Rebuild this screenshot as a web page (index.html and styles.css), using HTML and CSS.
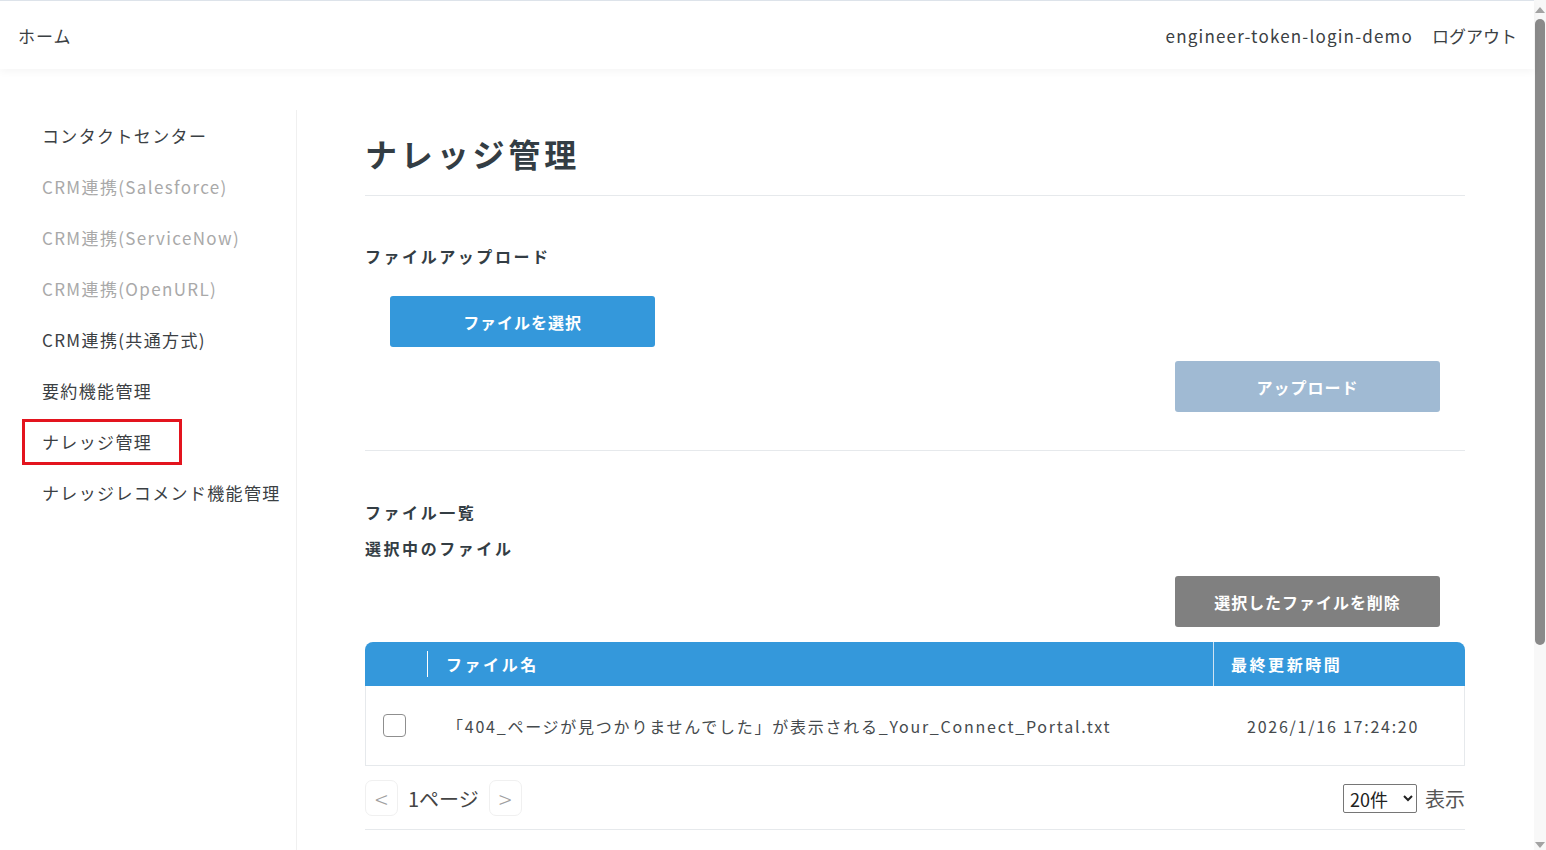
FILE: index.html
```html
<!DOCTYPE html>
<html lang="ja">
<head>
<meta charset="utf-8">
<title>ナレッジ管理</title>
<link rel="stylesheet" href="styles.css">
</head>
<body>
<div class="window">
  <div class="page">
    <header class="topbar">
      <a class="topbar-home" href="#">ホーム</a>
      <div class="topbar-user">
        <span class="topbar-name">engineer-token-login-demo</span>
        <a class="topbar-logout" href="#">ログアウト</a>
      </div>
    </header>

    <div class="layout">
      <nav class="sidebar">
        <ul class="menu">
          <li class="menu-item">コンタクトセンター</li>
          <li class="menu-item is-disabled">CRM連携(Salesforce)</li>
          <li class="menu-item is-disabled">CRM連携(ServiceNow)</li>
          <li class="menu-item is-disabled">CRM連携(OpenURL)</li>
          <li class="menu-item">CRM連携(共通方式)</li>
          <li class="menu-item">要約機能管理</li>
          <li class="menu-item is-current">ナレッジ管理</li>
          <li class="menu-item">ナレッジレコメンド機能管理</li>
        </ul>
      </nav>

      <main class="content">
        <h1 class="page-title">ナレッジ管理</h1>

        <section class="upload">
          <h2 class="section-title">ファイルアップロード</h2>
          <button class="btn btn-primary btn-pick" type="button">ファイルを選択</button>
          <div class="btn-row">
            <button class="btn btn-disabled" type="button">アップロード</button>
          </div>
        </section>

        <section class="files">
          <h2 class="section-title">ファイル一覧</h2>
          <h2 class="section-title sub">選択中のファイル</h2>
          <div class="btn-row">
            <button class="btn btn-gray" type="button">選択したファイルを削除</button>
          </div>

          <div class="table">
            <div class="table-head">
              <div class="col-check"><span class="head-sep"></span></div>
              <div class="col-name">ファイル名</div>
              <div class="col-date">最終更新時間</div>
            </div>
            <div class="table-row">
              <div class="col-check"><span class="checkbox"></span></div>
              <div class="col-name">「404_ページが見つかりませんでした」が表示される_Your_Connect_Portal.txt</div>
              <div class="col-date">2026/1/16 17:24:20</div>
            </div>
          </div>

          <div class="pager">
            <div class="pager-nav">
              <span class="pager-btn">&lt;</span>
              <span class="pager-label">1ページ</span>
              <span class="pager-btn">&gt;</span>
            </div>
            <div class="pager-size">
              <select class="size-select">
                <option>20件</option>
                <option>50件</option>
                <option>100件</option>
              </select>
              <span class="size-label">表示</span>
            </div>
          </div>
        </section>
      </main>
    </div>
  </div>

  <div class="scrollbar" aria-hidden="true">
    <span class="scroll-arrow up"></span>
    <div class="scroll-track">
      <span class="scroll-thumb"></span>
    </div>
    <span class="scroll-arrow down"></span>
  </div>
</div>
</body>
</html>
```

FILE: styles.css
```css
*,
*::before,
*::after {
  box-sizing: border-box;
}

html, body {
  margin: 0;
  padding: 0;
}

body {
  font-family: "Noto Sans CJK JP", "Noto Sans", sans-serif;
  font-size: 16px;
  color: #3b4043;
  background: #fff;
  letter-spacing: 0.12em;
}

a {
  color: inherit;
  text-decoration: none;
}

/* page column + window scrollbar */
.window {
  display: flex;
  height: 850px;
  overflow: hidden;
}

.page {
  flex: 1;
  min-width: 0;
}

.scrollbar {
  width: 12px;
  flex: none;
  background: #f8f8f8;
  display: flex;
  flex-direction: column;
  align-items: center;
}

.scroll-arrow {
  width: 0;
  height: 0;
  border-left: 5px solid transparent;
  border-right: 5px solid transparent;
  flex: none;
}

.scroll-arrow.up {
  margin-top: 7px;
  border-bottom: 6px solid #a3a3a3;
}

.scroll-arrow.down {
  margin-bottom: 2px;
  border-top: 6px solid #a3a3a3;
}

.scroll-track {
  flex: 1;
  width: 100%;
  padding: 6px 0 0 1px;
}

.scroll-thumb {
  display: block;
  width: 10px;
  height: 626px;
  background: #8a8a8a;
  border-radius: 5px;
}

/* top bar */
.topbar {
  height: 69px;
  border-top: 1px solid #dde3ea;
  display: flex;
  align-items: center;
  justify-content: space-between;
  padding: 0 17px 0 18px;
  box-shadow: 0 3px 8px rgba(0, 0, 0, 0.04);
  background: #fff;
  position: relative;
  font-size: 17px;
}

.topbar-home {
  letter-spacing: 0.06em;
}

.topbar-user {
  display: flex;
  gap: 19px;
  align-items: center;
}

.topbar-name {
  letter-spacing: 0.07em;
}

.topbar-logout {
  letter-spacing: 0;
}

/* two-column layout */
.layout {
  display: flex;
  margin-top: 41px;
}

.sidebar {
  width: 297px;
  flex: none;
  border-right: 1px solid #f0f0f0;
  padding-left: 22px;
  min-height: 760px;
}

.menu {
  list-style: none;
  margin: 0;
  padding: 0;
}

.menu-item {
  height: 51px;
  line-height: 51px;
  padding-left: 20px;
  color: #3b4043;
  font-size: 17px;
  letter-spacing: 0.08em;
  white-space: nowrap;
  position: relative;
}

.menu-item.is-disabled {
  color: #a9a9a9;
}

/* highlight frame around the current page entry */
.menu-item.is-current::after {
  content: "";
  position: absolute;
  left: 0;
  top: 3px;
  width: 160px;
  height: 46px;
  border: 3px solid #e3141e;
}

/* main content */
.content {
  flex: 1;
  padding: 0 69px 0 68px;
  min-width: 0;
}

.page-title {
  margin: 19px 0 0;
  font-size: 32px;
  line-height: 48px;
  font-weight: 700;
  color: #333d44;
  letter-spacing: 0.12em;
  padding-bottom: 18px;
  border-bottom: 1px solid #e6e9ec;
}

.upload {
  padding-top: 48px;
  padding-bottom: 38px;
  border-bottom: 1px solid #e6e9ec;
}

.section-title {
  margin: 0;
  font-size: 16px;
  line-height: 24px;
  font-weight: 700;
  color: #333d44;
  letter-spacing: 0.16em;
}

.section-title.sub {
  margin-top: 12px;
}

.btn {
  display: block;
  width: 265px;
  height: 51px;
  border: none;
  border-radius: 3px;
  color: #fff;
  font-family: inherit;
  font-size: 16px;
  font-weight: 700;
  letter-spacing: 0.06em;
}

.btn-primary {
  background: #3498db;
}

.btn-pick {
  margin: 28px 0 0 25px;
}

.btn-disabled {
  background: #a0bad3;
}

.btn-gray {
  background: #808080;
}

.btn-row {
  display: flex;
  justify-content: flex-end;
  padding-right: 25px;
  margin-top: 14px;
}

.files {
  padding-top: 49px;
}

.files .btn-row {
  margin-top: 16px;
}

/* table */
.table {
  margin-top: 15px;
  border-radius: 8px 8px 0 0;
  overflow: hidden;
}

.table-head,
.table-row {
  display: flex;
  align-items: stretch;
}

.table-head {
  height: 44px;
  background: #3498db;
  color: #fff;
  font-weight: 700;
  letter-spacing: 0.16em;
}

.table-head > div {
  display: flex;
  align-items: center;
}

.table-row {
  height: 80px;
  border: 1px solid #e6e9ec;
  border-top: none;
  color: #454a4d;
}

.table-row > div {
  display: flex;
  align-items: center;
}

.col-check {
  width: 63px;
  flex: none;
  position: relative;
}

.table-head .col-check .head-sep {
  position: absolute;
  right: 0;
  top: 9px;
  bottom: 9px;
  width: 1px;
  background: #fff;
}

.col-name {
  flex: 1;
  padding-left: 18px;
  border-right: 1px solid #cfe3f2;
  white-space: nowrap;
}

.table-row .col-name {
  border-right: none;
  letter-spacing: 0.11em;
}

.col-date {
  width: 251px;
  flex: none;
  padding-left: 17px;
}

.table-row .col-date {
  padding-left: 34px;
  letter-spacing: 0.11em;
}

.table-row .col-check {
  padding-left: 17px;
}

.checkbox {
  display: block;
  width: 23px;
  height: 23px;
  border: 1px solid #8f8f8f;
  border-radius: 4px;
  background: #fff;
}

/* pager */
.pager {
  margin-top: 14px;
  padding-bottom: 13px;
  border-bottom: 1px solid #e6e9ec;
  display: flex;
  justify-content: space-between;
  align-items: center;
}

.pager-nav {
  display: flex;
  align-items: center;
  gap: 10px;
}

.pager-btn {
  width: 33px;
  height: 36px;
  border: 1px solid #f0f0f0;
  border-radius: 7px;
  display: flex;
  align-items: center;
  justify-content: center;
  color: #a0a0a0;
  font-size: 24px;
  font-weight: 300;
  letter-spacing: 0;
}

.pager-label {
  font-size: 20px;
  color: #444;
  letter-spacing: 0;
}

.pager-size {
  display: flex;
  align-items: center;
  gap: 8px;
}

.size-select {
  width: 74px;
  height: 29px;
  font-family: inherit;
  font-size: 18px;
  letter-spacing: 0;
  color: #222;
  border: 1px solid #767676;
  border-radius: 2px;
  background: #fff;
  padding: 0 0 0 2px;
}

.size-label {
  font-size: 20px;
  color: #555;
  letter-spacing: 0;
}
```
